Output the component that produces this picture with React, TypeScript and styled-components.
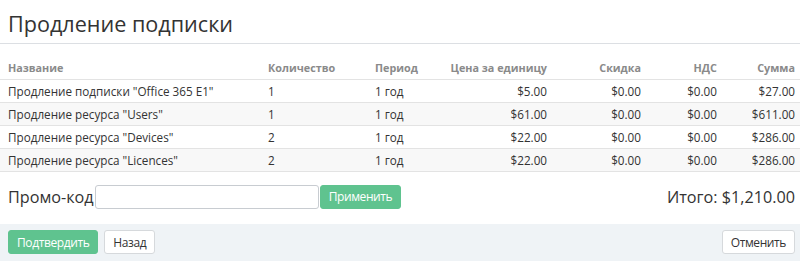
import React from "react";
import styled, { createGlobalStyle } from "styled-components";

const GlobalStyle = createGlobalStyle`
    html, body {
        margin: 0;
        padding: 0;
        background: #fff;
    }
    body {
        font-family: "Open Sans", "Liberation Sans", sans-serif;
        color: #333;
    }
`;

const Page = styled.div`
    width: 800px;
    height: 266px;
    display: flex;
    flex-direction: column;
`;

const Title = styled.h1`
    margin: 0;
    padding: 8px 8px 0;
    height: 35px;
    font-size: 21.6px;
    font-weight: 400;
    line-height: 32px;
    color: #333;
    border-bottom: 1px solid #dcdfe3;
`;

const Table = styled.table`
    margin-top: 12px;
    width: 800px;
    border-collapse: collapse;
    table-layout: fixed;
    font-size: 11.7px;
`;

const Th = styled.th<{ $right?: boolean; $w: number }>`
    box-sizing: border-box;
    width: ${(p) => p.$w}px;
    height: 23px;
    padding: 0 ${(p) => (p.$right ? "5px" : "0")} 0 ${(p) => (p.$right ? "0" : "8px")};
    text-align: ${(p) => (p.$right ? "right" : "left")};
    font-size: 10.8px;
    font-weight: 700;
    color: #8a8a8a;
    border-bottom: 1px solid #e3e3e3;
    vertical-align: middle;
`;

const Row = styled.tr<{ $alt?: boolean }>`
    background: ${(p) => (p.$alt ? "#f8f8f8" : "#fff")};
`;

const Td = styled.td<{ $right?: boolean }>`
    box-sizing: border-box;
    height: 23px;
    padding: 0 ${(p) => (p.$right ? "5px" : "0")} 0 ${(p) => (p.$right ? "0" : "8px")};
    text-align: ${(p) => (p.$right ? "right" : "left")};
    color: #333;
    border-bottom: 1px solid #e3e3e3;
    white-space: nowrap;
    vertical-align: middle;
`;

const PromoBar = styled.div`
    display: flex;
    align-items: center;
    justify-content: space-between;
    height: 24px;
    margin-top: 13px;
    padding: 0 5px 0 8px;
`;

const PromoGroup = styled.div`
    display: flex;
    align-items: center;
`;

const Label = styled.span`
    font-size: 16.2px;
    color: #333;
`;

const Input = styled.input`
    box-sizing: border-box;
    width: 224px;
    height: 24px;
    margin: 0 1px 0 1px;
    border: 1px solid #c8ccd1;
    border-radius: 3px;
    background: #fff;
    outline: none;
`;

const Button = styled.button<{ $primary?: boolean }>`
    box-sizing: border-box;
    height: 24px;
    padding: 0 8px;
    border-radius: 3px;
    font-family: "Open Sans", "Liberation Sans", sans-serif;
    font-size: 12px;
    letter-spacing: -0.4px;
    cursor: pointer;
    border: 1px solid ${(p) => (p.$primary ? "#5fc38f" : "#d6d9dc")};
    background: ${(p) => (p.$primary ? "#5fc38f" : "#fff")};
    color: ${(p) => (p.$primary ? "#fff" : "#333")};
`;

const Total = styled.span`
    font-size: 16.2px;
    color: #333;
`;

const Footer = styled.div`
    display: flex;
    align-items: center;
    gap: 6px;
    height: 37px;
    margin-top: 15px;
    padding: 0 5px 0 8px;
    background: #eff3f6;
`;

const Spacer = styled.div`
    flex: 1;
`;

const columns = [
    { label: "Название", w: 260 },
    { label: "Количество", w: 107 },
    { label: "Период", w: 80 },
    { label: "Цена за единицу", w: 105, right: true },
    { label: "Скидка", w: 94, right: true },
    { label: "НДС", w: 76, right: true },
    { label: "Сумма", w: 78, right: true },
];

const rows = [
    ['Продление подписки "Office 365 E1"', "1", "1 год", "$5.00", "$0.00", "$0.00", "$27.00"],
    ['Продление ресурса "Users"', "1", "1 год", "$61.00", "$0.00", "$0.00", "$611.00"],
    ['Продление ресурса "Devices"', "2", "1 год", "$22.00", "$0.00", "$0.00", "$286.00"],
    ['Продление ресурса "Licences"', "2", "1 год", "$22.00", "$0.00", "$0.00", "$286.00"],
];

export default function App() {
    return (
        <>
            <GlobalStyle />
            <Page>
                <Title>Продление подписки</Title>
                <Table>
                    <thead>
                        <tr>
                            {columns.map((c) => (
                                <Th key={c.label} $w={c.w} $right={c.right}>
                                    {c.label}
                                </Th>
                            ))}
                        </tr>
                    </thead>
                    <tbody>
                        {rows.map((r, i) => (
                            <Row key={i} $alt={i % 2 === 1}>
                                {r.map((cell, j) => (
                                    <Td key={j} $right={columns[j].right}>
                                        {cell}
                                    </Td>
                                ))}
                            </Row>
                        ))}
                    </tbody>
                </Table>
                <PromoBar>
                    <PromoGroup>
                        <Label>Промо-код</Label>
                        <Input />
                        <Button $primary>Применить</Button>
                    </PromoGroup>
                    <Total>Итого: $1,210.00</Total>
                </PromoBar>
                <Footer>
                    <Button $primary>Подтвердить</Button>
                    <Button>Назад</Button>
                    <Spacer />
                    <Button>Отменить</Button>
                </Footer>
            </Page>
        </>
    );
}
